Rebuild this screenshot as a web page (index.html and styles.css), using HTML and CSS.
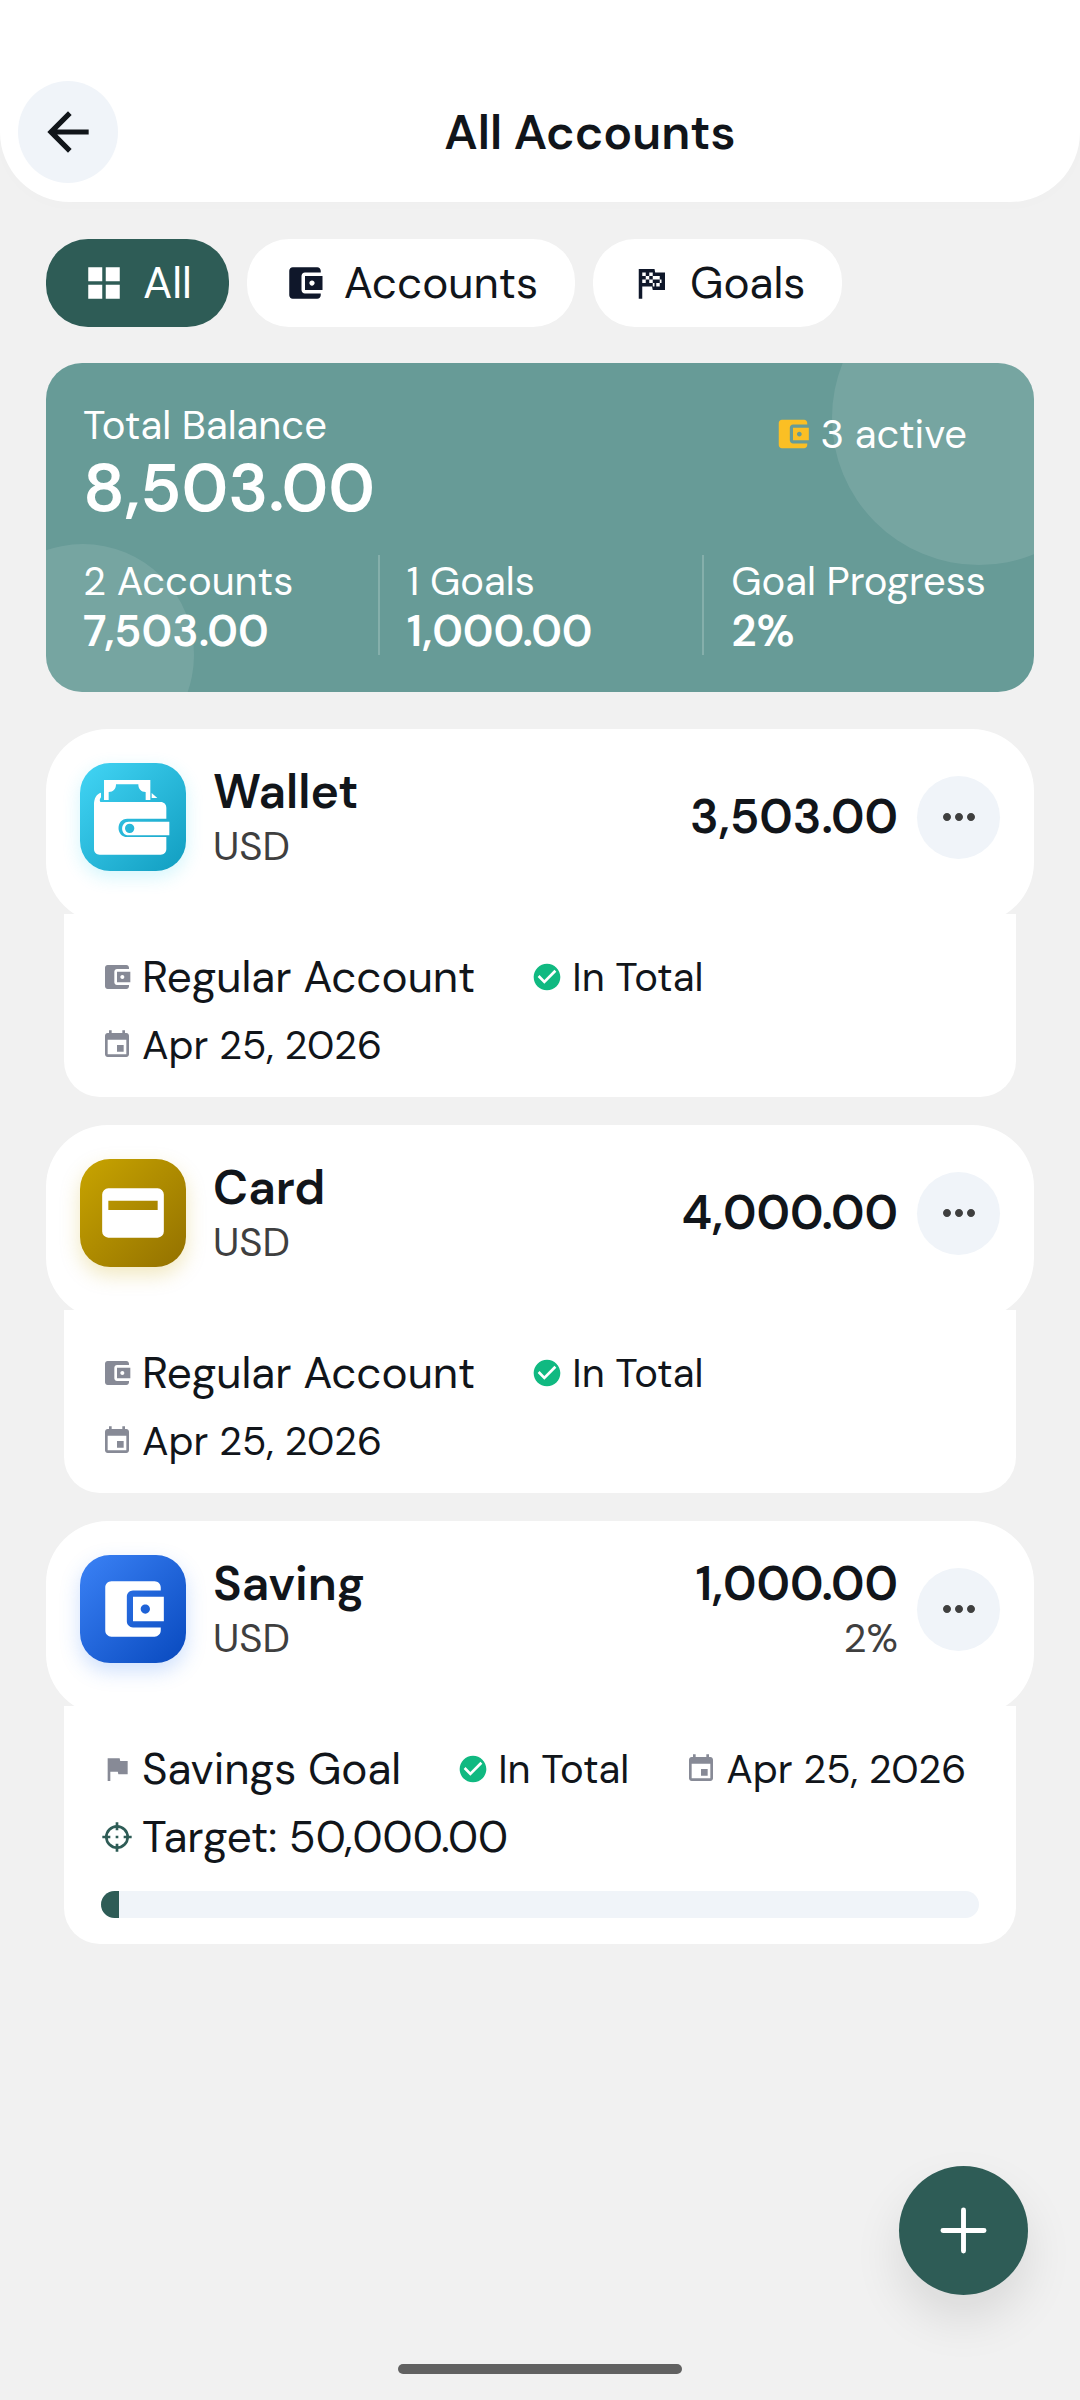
FILE: index.html
```html
<!DOCTYPE html>
<html lang="en">

<head>
    <meta charset="utf-8" />
    <meta name="viewport" content="width=device-width, initial-scale=1">
    <title>All Accounts</title>
    <link rel="stylesheet" href="styles.css">
</head>

<body>
    <!-- shared icons -->
    <svg class="sprite" aria-hidden="true">
        <symbol id="i-wallet" viewBox="0 0 24 24">
            <path d="M21 18v1c0 1.1-.9 2-2 2H5c-1.11 0-2-.9-2-2V5c0-1.1.89-2 2-2h14c1.1 0 2 .9 2 2v1h-9c-1.11 0-2 .9-2 2v8c0 1.1.89 2 2 2h9zm-9-2h10V8H12v8zm4-2.5c-.83 0-1.5-.67-1.5-1.5s.67-1.5 1.5-1.5 1.5.67 1.5 1.5-.67 1.5-1.5 1.5z" />
        </symbol>
        <symbol id="i-check" viewBox="0 0 24 24">
            <path d="M12 2C6.48 2 2 6.48 2 12s4.48 10 10 10 10-4.48 10-10S17.52 2 12 2zm-2 15l-5-5 1.41-1.41L10 14.17l7.59-7.59L19 8l-9 9z" />
        </symbol>
        <symbol id="i-date" viewBox="0 0 24 24">
            <path d="M17 12h-5v5h5v-5zM16 1v2H8V1H6v2H5c-1.11 0-1.99.9-1.99 2L3 19c0 1.1.89 2 2 2h14c1.1 0 2-.9 2-2V5c0-1.1-.9-2-2-2h-1V1h-2zm3 18H5V8h14v11z" />
        </symbol>
        <symbol id="i-more" viewBox="0 0 24 24">
            <path d="M6 10c-1.1 0-2 .9-2 2s.9 2 2 2 2-.9 2-2-.9-2-2-2zm12 0c-1.1 0-2 .9-2 2s.9 2 2 2 2-.9 2-2-.9-2-2-2zm-6 0c-1.1 0-2 .9-2 2s.9 2 2 2 2-.9 2-2-.9-2-2-2z" />
        </symbol>
    </svg>

    <header class="header">
        <button class="back-btn" aria-label="Back">
            <svg class="back-icon" viewBox="0 0 24 24"><path d="M20 11H7.83l5.59-5.59L12 4l-8 8 8 8 1.41-1.41L7.83 13H20v-2z" /></svg>
        </button>
        <h1 class="title">All Accounts</h1>
    </header>

    <main class="content">
        <nav class="filters">
            <button class="chip chip-active">
                <svg class="chip-icon" viewBox="0 0 24 24"><path d="M3 3h8v8H3zM13 3h8v8h-8zM3 13h8v8H3zM13 13h8v8h-8z" /></svg>
                All
            </button>
            <button class="chip">
                <svg class="chip-icon"><use href="#i-wallet" /></svg>
                Accounts
            </button>
            <button class="chip">
                <svg class="chip-icon" viewBox="0 0 24 24">
                    <path fill-rule="evenodd" d="M14.4 6 14 4H5v17h2v-7h5.6l.4 2h7V6zM14 14v-2h-1v2zM7 6h2v2H7zM11 6h2v2h-2zM9 8h2v2H9zM13 8h2v2h-2zM7 10h2v2H7zM11 10h2v2h-2zM15 10h2v-2h-2zM15 12h2v-2h1v2h-1v2h-2z" />
                </svg>
                Goals
            </button>
        </nav>

        <section class="balance">
            <div class="balance-top">
                <div>
                    <div class="label">Total Balance</div>
                    <div class="total">8,503.00</div>
                </div>
                <div class="active-count">
                    <svg class="active-icon"><use href="#i-wallet" /></svg>
                    3 active
                </div>
            </div>
            <div class="stats">
                <div class="stat">
                    <div class="label">2 Accounts</div>
                    <div class="stat-value">7,503.00</div>
                </div>
                <div class="stat">
                    <div class="label">1 Goals</div>
                    <div class="stat-value">1,000.00</div>
                </div>
                <div class="stat">
                    <div class="label">Goal Progress</div>
                    <div class="stat-value">2%</div>
                </div>
            </div>
        </section>

        <article class="account">
            <div class="account-head">
                <div class="logo logo-cyan">
                    <svg class="logo-full" viewBox="0 0 324 324">
                        <path d="M45 124c0-18 8-32 21-35v14c-4 5-5 10-2 14h181c10 0 17 7 17 17v33H145c-35 0-35 55 0 55h117v36c0 10-7 17-17 17H62c-10 0-17-7-17-17z" />
                        <path d="M75 51h139v60h-14V87c-14 0-22-9-22-23h-67c0 14-8 23-22 23v24H75zM218 90l17 15h-17z" />
                        <path fill-rule="evenodd" d="M271 176H149c-26 0-26 41 0 41h122zM152 182a14 14 0 1 1 0 28 14 14 0 0 1 0-28z" />
                    </svg>
                </div>
                <div class="account-name">
                    <h2 class="name">Wallet</h2>
                    <div class="sub">USD</div>
                </div>
                <div class="account-amount">
                    <div class="name">3,503.00</div>
                </div>
                <button class="more-btn" aria-label="More"><svg class="more-icon"><use href="#i-more" /></svg></button>
            </div>
            <div class="account-body">
                <div class="details">
                    <div class="detail detail-lg"><svg class="detail-icon"><use href="#i-wallet" /></svg>Regular Account</div>
                    <div class="detail"><svg class="detail-icon icon-green"><use href="#i-check" /></svg>In Total</div>
                    <div class="detail"><svg class="detail-icon"><use href="#i-date" /></svg>Apr 25, 2026</div>
                </div>
            </div>
        </article>

        <article class="account">
            <div class="account-head">
                <div class="logo logo-gold">
                    <svg class="logo-icon" viewBox="0 0 24 24"><path fill-rule="evenodd" d="M4 4h16a2 2 0 0 1 2 2v12a2 2 0 0 1-2 2H4a2 2 0 0 1-2-2V6a2 2 0 0 1 2-2zm0 4v3h16V8z" /></svg>
                </div>
                <div class="account-name">
                    <h2 class="name">Card</h2>
                    <div class="sub">USD</div>
                </div>
                <div class="account-amount">
                    <div class="name">4,000.00</div>
                </div>
                <button class="more-btn" aria-label="More"><svg class="more-icon"><use href="#i-more" /></svg></button>
            </div>
            <div class="account-body">
                <div class="details">
                    <div class="detail detail-lg"><svg class="detail-icon"><use href="#i-wallet" /></svg>Regular Account</div>
                    <div class="detail"><svg class="detail-icon icon-green"><use href="#i-check" /></svg>In Total</div>
                    <div class="detail"><svg class="detail-icon"><use href="#i-date" /></svg>Apr 25, 2026</div>
                </div>
            </div>
        </article>

        <article class="account">
            <div class="account-head">
                <div class="logo logo-blue">
                    <svg class="logo-icon"><use href="#i-wallet" /></svg>
                </div>
                <div class="account-name">
                    <h2 class="name">Saving</h2>
                    <div class="sub">USD</div>
                </div>
                <div class="account-amount">
                    <div class="name">1,000.00</div>
                    <div class="sub">2%</div>
                </div>
                <button class="more-btn" aria-label="More"><svg class="more-icon"><use href="#i-more" /></svg></button>
            </div>
            <div class="account-body">
                <div class="details">
                    <div class="detail detail-lg">
                        <svg class="detail-icon" viewBox="0 0 24 24"><path d="M14.4 6L14 4H5v17h2v-7h5.6l.4 2h7V6z" /></svg>Savings Goal
                    </div>
                    <div class="detail"><svg class="detail-icon icon-green"><use href="#i-check" /></svg>In Total</div>
                    <div class="detail"><svg class="detail-icon"><use href="#i-date" /></svg>Apr 25, 2026</div>
                    <div class="detail detail-lg">
                        <svg class="detail-icon icon-target" viewBox="0 0 24 24">
                            <circle cx="12" cy="12" r="8" />
                            <path d="M12 1v6M12 17v6M1 12h6M17 12h6M11 12h2" />
                        </svg>Target: 50,000.00
                    </div>
                </div>
                <div class="progress" role="progressbar" aria-label="Savings progress" aria-valuenow="2" aria-valuemin="0" aria-valuemax="100">
                    <div class="progress-fill" style="width: 2%"></div>
                </div>
            </div>
        </article>
    </main>

    <button class="fab" aria-label="Add account">
        <svg class="fab-icon" viewBox="0 0 48 48"><path d="M24 3v42M3 24h42" /></svg>
    </button>
    <div class="home-bar"></div>
</body>

</html>
```
FILE: styles.css
```css
* {
    box-sizing: border-box;
}

body {
    margin: 0;
    min-height: 100vh;
    background-color: #f1f1f1;
    color: #11151a;
    font-family: "DM Sans", Inter, sans-serif;
    font-size: 40px;
    font-weight: 400;
}

button {
    border: none;
    padding: 0;
    font: inherit;
    color: inherit;
    cursor: pointer;
}

svg {
    display: block;
    flex: none;
    fill: currentColor;
}

.sprite {
    position: absolute;
    width: 0;
    height: 0;
}

.header {
    display: flex;
    align-items: center;
    padding: 81px 18px 19px;
    background-color: white;
    border-radius: 0 0 70px 70px;
    box-shadow: 0 4px 16px rgba(0, 0, 0, 0.01);
}

.back-btn {
    display: flex;
    align-items: center;
    justify-content: center;
    width: 100px;
    height: 102px;
    border-radius: 50%;
    background-color: #f0f4f9;
}

.back-icon {
    width: 62px;
    height: 62px;
}

.title {
    flex: 1;
    margin: 0;
    font-size: 48px;
    font-weight: 600;
    text-align: center;
}

.content {
    padding: 37px 46px;
}

.filters {
    display: flex;
    gap: 18px;
    margin-bottom: 36px;
}

.chip {
    display: flex;
    align-items: center;
    gap: 18px;
    height: 88px;
    padding: 0 37px;
    border-radius: 42px;
    background-color: white;
    font-size: 44px;
}

.chip-active {
    background-color: #2e5c56;
    color: white;
}

.chip-icon {
    width: 42px;
    height: 42px;
    fill: #0f172a;
}

.chip-active .chip-icon {
    fill: white;
}

.balance {
    position: relative;
    overflow: hidden;
    padding: 36px 37px 37px;
    border-radius: 36px;
    background-color: #679b97;
    color: white;
}

/* decorative circles */
.balance::before,
.balance::after {
    content: "";
    position: absolute;
    border-radius: 50%;
    background-color: rgba(255, 255, 255, 0.1);
}

.balance::before {
    top: -92px;
    right: -92px;
    width: 294px;
    height: 294px;
}

.balance::after {
    bottom: -74px;
    left: -74px;
    width: 222px;
    height: 222px;
}

.balance-top,
.stats {
    position: relative;
    z-index: 1;
}

.balance-top {
    display: flex;
    justify-content: space-between;
    align-items: flex-start;
}

.label {
    line-height: 52px;
}

.total {
    font-size: 67px;
    font-weight: 600;
    line-height: 76px;
}

.active-count {
    display: flex;
    align-items: center;
    gap: 9px;
    padding: 9px 30px;
    line-height: 52px;
}

.active-icon {
    width: 38px;
    height: 38px;
    fill: #fbbf24;
}

.stats {
    display: grid;
    grid-template-columns: 10fr 11fr 10fr;
    margin-top: 28px;
}

.stat {
    height: 100px;
    white-space: nowrap;
}

.stat + .stat {
    padding-left: 27px;
    border-left: 2px solid rgba(255, 255, 255, 0.2);
}

.stat-value {
    font-size: 44px;
    font-weight: 600;
    line-height: 48px;
}

.account {
    margin-top: 28px;
}

.balance + .account {
    margin-top: 37px;
}

.account-head {
    display: flex;
    align-items: center;
    height: 195px;
    padding: 34px 34px 53px;
    border-radius: 62px;
    background-color: white;
}

.logo {
    display: flex;
    align-items: center;
    justify-content: center;
    width: 106px;
    height: 108px;
    margin-right: 27px;
    border-radius: 30px;
    color: white;
}

.logo-cyan {
    background: linear-gradient(135deg, #42d5f5, #119dc0);
    box-shadow: 0 6px 18px rgba(34, 211, 238, 0.2);
}

.logo-gold {
    background: linear-gradient(135deg, #c8a400, #937100);
    box-shadow: 0 8px 20px rgba(200, 164, 0, 0.25);
}

.logo-blue {
    background: linear-gradient(135deg, #3b82f6, #0849be);
    box-shadow: 0 8px 20px rgba(59, 130, 246, 0.25);
}

.logo-full {
    width: 108px;
    height: 108px;
}

.logo-icon {
    width: 74px;
    height: 74px;
}

.name {
    margin: 0;
    font-size: 48px;
    font-weight: 600;
    line-height: 58px;
}

.sub {
    color: #3f3f3f;
    line-height: 50px;
}

.account-amount {
    margin-left: auto;
    text-align: right;
}

.more-btn {
    display: flex;
    align-items: center;
    justify-content: center;
    width: 83px;
    height: 83px;
    margin-left: 19px;
    border-radius: 50%;
    background-color: #f0f4f9;
    color: #3f3f3f;
}

.more-icon {
    width: 48px;
    height: 48px;
}

.account-body {
    margin: -10px 18px 0;
    padding: 37px 37px 26px;
    border-radius: 0 0 36px 36px;
    background-color: white;
}

.details {
    display: flex;
    flex-wrap: wrap;
    gap: 16px 56px;
}

.detail {
    display: flex;
    align-items: center;
    gap: 9px;
    line-height: 52px;
    white-space: nowrap;
}

.detail-lg {
    font-size: 44px;
}

.detail-icon {
    width: 32px;
    height: 32px;
    fill: #878a96;
}

.icon-green {
    fill: #10b981;
}

.icon-target {
    fill: none;
    stroke: #2e5c56;
    stroke-width: 2;
}

.progress {
    height: 27px;
    margin-top: 28px;
    border-radius: 14px;
    background-color: #f0f4f9;
    overflow: hidden;
}

.progress-fill {
    height: 100%;
    background-color: #2e5c56;
}

.fab {
    position: fixed;
    right: 52px;
    bottom: 105px;
    display: flex;
    align-items: center;
    justify-content: center;
    width: 129px;
    height: 129px;
    border-radius: 50%;
    background-color: #2e5c56;
    box-shadow: 0 24px 48px rgba(0, 0, 0, 0.1);
}

.fab-icon {
    width: 47px;
    height: 47px;
    fill: none;
    stroke: white;
    stroke-width: 5;
    stroke-linecap: round;
}

.home-bar {
    position: fixed;
    bottom: 26px;
    left: 50%;
    width: 284px;
    height: 10px;
    margin-left: -142px;
    border-radius: 5px;
    background-color: #616161;
}
```
